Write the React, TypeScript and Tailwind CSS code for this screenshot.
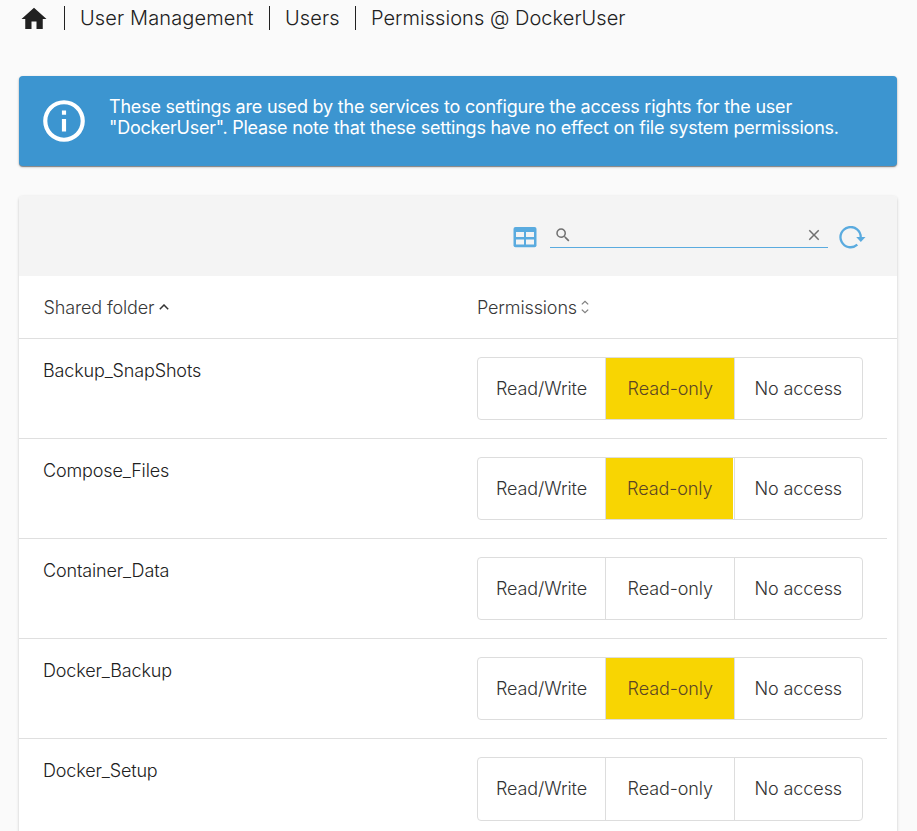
import React from "react";

type Access = "Read/Write" | "Read-only" | "No access";

const levels: Access[] = ["Read/Write", "Read-only", "No access"];

const folders: { name: string; access?: Access; narrow?: boolean; tall?: boolean }[] = [
  { name: "Backup_SnapShots", access: "Read-only" },
  { name: "Compose_Files", access: "Read-only", narrow: true },
  { name: "Container_Data" },
  { name: "Docker_Backup", access: "Read-only" },
  { name: "Docker_Setup", tall: true },
];

function Breadcrumb() {
  return (
    <nav className="flex h-9 items-center pl-[19px] text-[20px] text-[#212121]">
      <svg className="mt-[1px] h-[30px] w-[30px]" viewBox="0 0 24 24" fill="currentColor">
        <path d="M10 20v-6h4v6h5v-8h3L12 3 2 12h3v8z" />
      </svg>
      <span className="ml-[15px] h-6 w-px bg-[#212121]" />
      <span className="ml-[15px] w-[174px] whitespace-nowrap tracking-[0.13px]">User Management</span>
      <span className="ml-[15px] h-6 w-px bg-[#212121]" />
      <span className="ml-[15px] w-[55px] whitespace-nowrap tracking-[0.1px]">Users</span>
      <span className="ml-[15px] h-6 w-px bg-[#212121]" />
      <span className="ml-[15px] whitespace-nowrap tracking-[0.04px]">Permissions @ DockerUser</span>
    </nav>
  );
}

function Notice() {
  return (
    <div className="mx-[19px] mr-5 mt-10 flex h-[90px] items-center rounded bg-[#3c95d0] pl-5 text-white shadow-[0_1px_1px_rgba(0,0,0,0.4),0_1px_3px_rgba(0,0,0,0.2)]">
      <svg className="h-[50px] w-[50px] shrink-0" viewBox="0 0 24 24" fill="currentColor">
        <path d="M11 9h2V7h-2m1 13c-4.410 0-8-3.590-8-8s3.590-8 8-8 8 3.590 8 8-3.590 8-8 8m0-18A10 10 0 0 0 2 12a10 10 0 0 0 10 10 10 10 0 0 0 10-10A10 10 0 0 0 12 2m-1 15h2v-6h-2v6z" />
      </svg>
      <p className="mb-[9px] ml-5 whitespace-nowrap text-[18px] font-normal leading-[21px]">
        <span className="tracking-[-0.21px]">
          These settings are used by the services to configure the access rights for the user
        </span>
        <br />
        <span className="tracking-[-0.24px]">
          "DockerUser". Please note that these settings have no effect on file system permissions.
        </span>
      </p>
    </div>
  );
}

function Toolbar() {
  return (
    <div className="flex h-[80px] items-start rounded-t bg-[#f4f4f4] pl-[494px] pt-[30px]">
      <svg className="mt-px h-[22px] w-6" viewBox="0 0 24 22">
        <rect x="0.500" y="0" width="23" height="20.300" rx="2" fill="#5aabdf" />
        <path d="M3 5h8v5H3zM13 5h8v5h-8zM3 12.500h8v5H3zM13 12.500h8v5h-8z" fill="#f4f4f4" />
      </svg>
      <div className="ml-[13px] flex h-[22px] w-[278px] items-start justify-between border-b border-[#5aabdf] pl-1 pr-[5px] text-[#707070]">
        <svg className="h-[18px] w-[18px]" viewBox="0 0 24 24" fill="currentColor">
          <path d="M9.500 3A6.500 6.500 0 0 1 16 9.500c0 1.610-.590 3.090-1.560 4.230l.270.270h.790l5 5-1.500 1.500-5-5v-.790l-.270-.270A6.516 6.516 0 0 1 9.500 16 6.500 6.500 0 0 1 3 9.500 6.500 6.500 0 0 1 9.500 3m0 2C7 5 5 7 5 9.500S7 14 9.500 14 14 12 14 9.500 12 5 9.500 5z" />
        </svg>
        <svg className="h-[18px] w-[18px]" viewBox="0 0 24 24" fill="currentColor">
          <path d="M19 6.410 17.590 5 12 10.590 6.410 5 5 6.410 10.590 12 5 17.590 6.410 19 12 13.410 17.590 19 19 17.590 13.410 12z" />
        </svg>
      </div>
      <svg className="ml-[11px] h-6 w-7" viewBox="0 0 28 24">
        <path d="M21.700 11.500a10.100 10.100 0 1 0-3.400 7.200" fill="none" stroke="#5aabdf" strokeWidth="2.300" />
        <path d="M17.200 11h9.300L21.800 15.900z" fill="#5aabdf" />
      </svg>
    </div>
  );
}

function Header() {
  return (
    <div className="flex h-[63px] items-center border-b border-[#dfdfdf] pl-[24.5px] text-[18px] tracking-[-0.14px] text-[#383838]">
      <div className="flex w-[433.5px] items-center">
        <span className="w-[112px] whitespace-nowrap">Shared folder</span>
        <svg className="ml-[3.5px] h-[6px] w-[10px]" viewBox="0 0 10 6" fill="none" stroke="#333333" strokeWidth="1.500">
          <path d="M.8 5.200 5 1l4.200 4.200" />
        </svg>
      </div>
      <div className="flex items-center">
        <span className="w-[100px] whitespace-nowrap">Permissions</span>
        <svg className="ml-1 h-[14px] w-[8px]" viewBox="0 0 8 14" fill="none" stroke="#808080" strokeWidth="1.300">
          <path d="M.8 4.400 4 1.400l3.200 3M.8 9.600 4 12.600l3.200-3" />
        </svg>
      </div>
    </div>
  );
}

function AccessToggle({ value, narrow, tall }: { value?: Access; narrow?: boolean; tall?: boolean }) {
  return (
    <div
      className={`mt-[18px] flex w-[386px] overflow-hidden rounded border border-[#dddddd] text-[18px] tracking-[-0.1px] text-[#333333] ${
        tall ? "h-[64px] pb-px" : "h-[63px]"
      }`}
    >
      {levels.map((level, i) => {
        const active = value === level;
        return (
          <div
            key={level}
            className={`${i === 0 ? "w-[127px]" : "flex-1 border-l border-[#dddddd]"} ${tall ? "-mb-px pb-px" : ""}`}
          >
            <div
              className={`flex h-full items-center justify-center whitespace-nowrap ${i === 1 ? "pl-px" : ""} ${
                active ? "bg-[#f8d502] text-[#5c4524]" : ""
              } ${active && narrow ? "mr-px" : ""}`}
            >
              {level}
            </div>
          </div>
        );
      })}
    </div>
  );
}

export default function App() {
  return (
    <div className="h-[831px] overflow-hidden bg-[#fafafa] font-['Inter',sans-serif] font-light">
      <Breadcrumb />
      <Notice />
      <main className="ml-[19px] mr-5 mt-[30px] h-[700px] rounded bg-white shadow-[0_1px_3px_rgba(0,0,0,0.22)]">
        <Toolbar />
        <Header />
        {folders.map((folder) => (
          <div key={folder.name} className="mr-[10px] flex h-[100px] border-b border-[#dfdfdf] pl-[24px]">
            <div className="w-[434px] pt-[18px] text-[18px] leading-[27px] tracking-[-0.15px] text-[#212121]">
              {folder.name}
            </div>
            <AccessToggle value={folder.access} narrow={folder.narrow} tall={folder.tall} />
          </div>
        ))}
      </main>
    </div>
  );
}
